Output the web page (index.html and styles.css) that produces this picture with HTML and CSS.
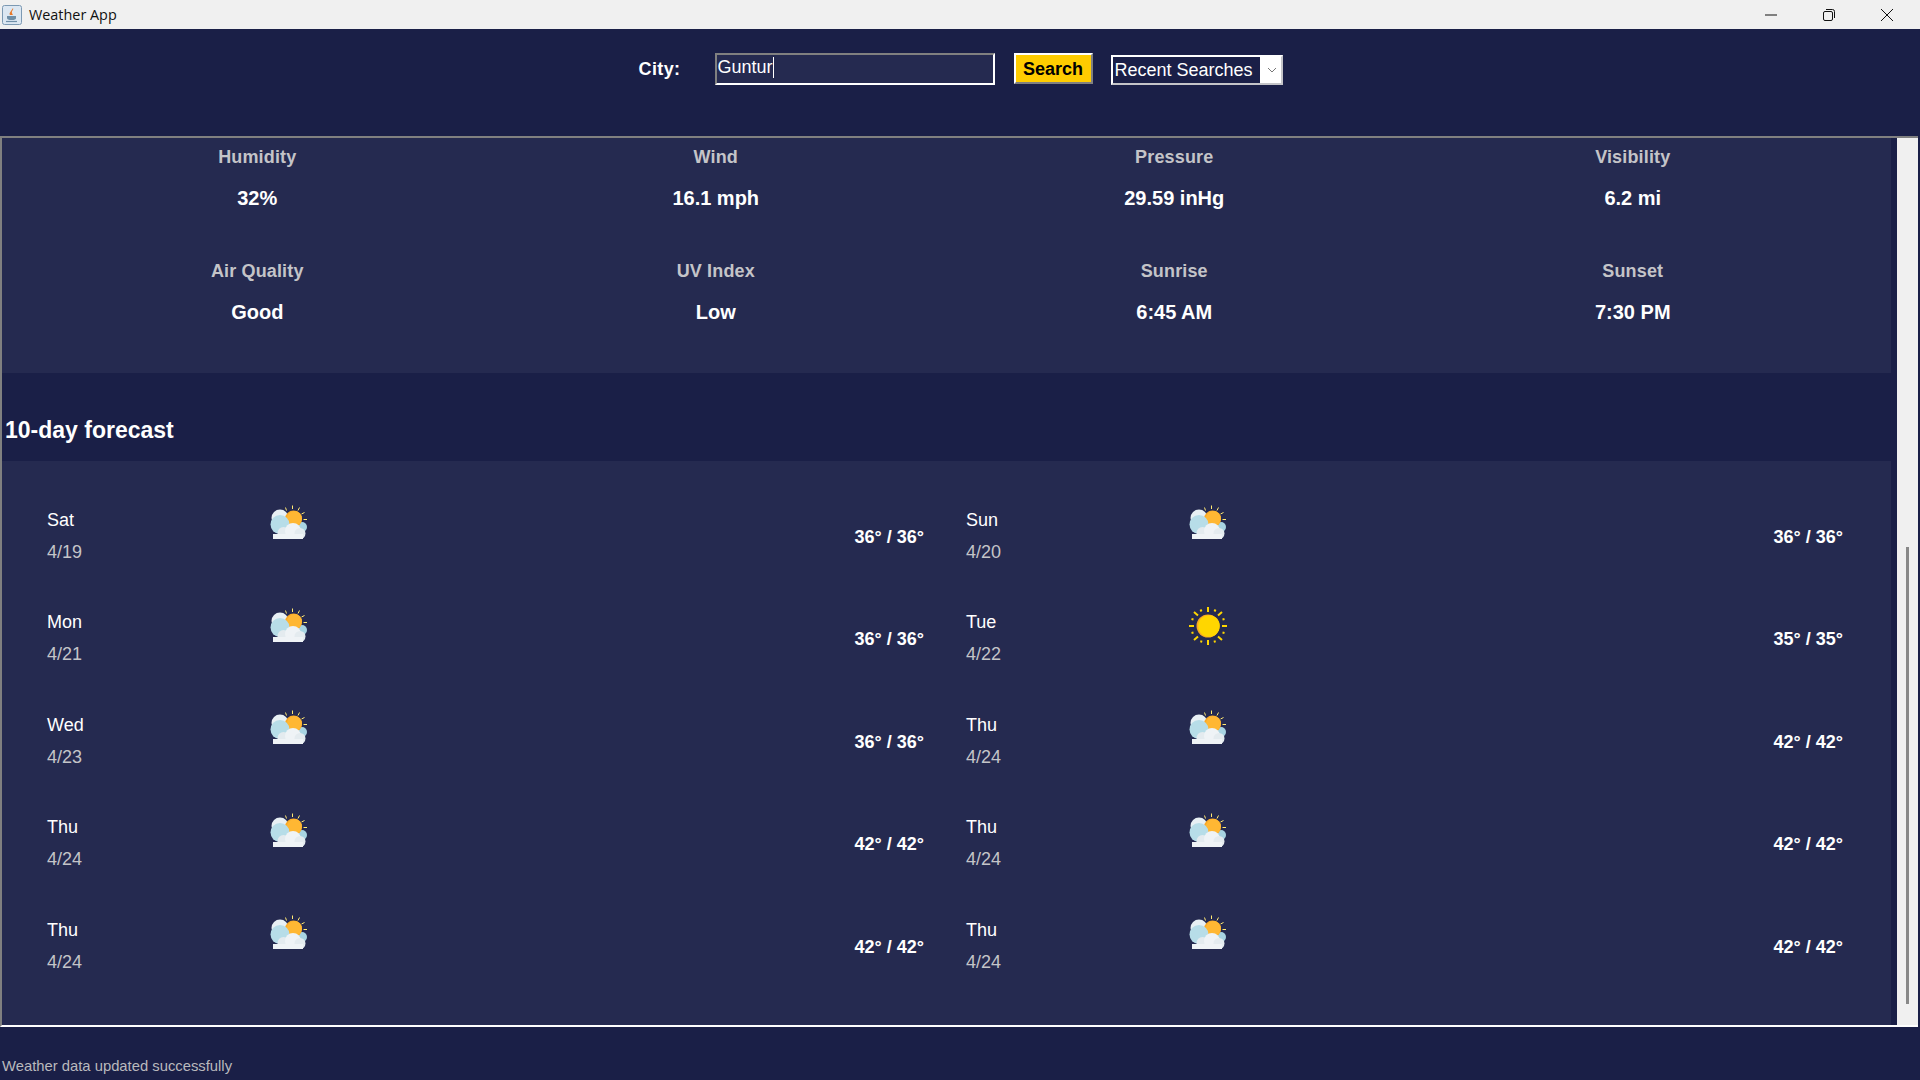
FILE: index.html
```html
<!DOCTYPE html>
<html lang="en">
<head>
    <meta charset="UTF-8">
    <title>Weather App</title>
    <link rel="stylesheet" href="styles.css">
</head>
<body>
    <svg class="icon-defs" width="0" height="0">
        <symbol id="partly" viewBox="0 0 38 38">
            <g stroke="#ffe873" stroke-width="1">
                <path d="M15.500 3.500l1 3M22.500 1.500v3.500M29.500 3.500l-1.500 3M34.500 8.500l-3 1.500M37 15.500h-3.500"/>
            </g>
            <circle cx="10" cy="14" r="8.500" fill="#e8f0f4"/>
            <circle cx="32" cy="23" r="5" fill="#a8d4e2"/>
            <circle cx="23.500" cy="15" r="8.500" fill="#f9a825"/>
            <circle cx="24.500" cy="14.500" r="7.500" fill="#ffb733"/>
            <circle cx="10" cy="20.500" r="9.500" fill="#b7dde8"/>
            <circle cx="13.500" cy="29" r="6" fill="#e4ebef"/>
            <circle cx="23" cy="27" r="8" fill="#eff3f6"/>
            <circle cx="30" cy="29.500" r="5.500" fill="#e4ebef"/>
            <rect x="3" y="30" width="30" height="5" fill="#eff3f6"/>
        </symbol>
        <symbol id="sunny" viewBox="0 0 38 38">
            <g stroke="#ffd600" stroke-width="2">
                <path d="M19 0v5M19 33v5M0 19h5M33 19h5M5 5l4 3.500M33 5l-4 3.500M5 33l4-3.500M33 33l-4-3.500"/>
                <path d="M11.500 2.500l1 2M26.500 2.500l-1 2M2.500 12l2 .5M35.500 12l-2 .5M2.500 26l2-.5M35.500 26l-2-.5M12 35.500l.5-2M26 35.500l-.5-2"/>
            </g>
            <circle cx="19" cy="19" r="11.500" fill="#f9a825"/>
            <circle cx="20" cy="19" r="10.800" fill="#ffd600"/>
        </symbol>
    </svg>

    <div class="window">
        <div class="titlebar">
            <svg class="app-icon" width="20" height="20" viewBox="0 0 20 20">
                <rect x="0.500" y="0.500" width="19" height="19" rx="2" fill="#dce7f2" stroke="#7c99b3"/>
                <path d="M11 3c1 2-2 3-1 5 .3 1 1 2 1 2H8C6.500 8 9.500 6 11 3z" fill="#e8792b"/>
                <path d="M5 11h9v2c0 1.500-1.500 2-4.500 2S5 14.500 5 13z" fill="#6f8fa8"/>
                <path d="M4 16.500h11" stroke="#6f8fa8" stroke-width="1.200"/>
            </svg>
            <span class="app-title">Weather App</span>
            <div class="window-controls">
                <svg width="14" height="14" viewBox="0 0 14 14"><path d="M1 7h12" stroke="#111" stroke-width="1"/></svg>
                <svg width="14" height="14" viewBox="0 0 14 14" fill="none" stroke="#111" stroke-width="1"><rect x="1.500" y="3.500" width="9" height="9" rx="1.500"/><path d="M4 1.500h6.500a2 2 0 0 1 2 2V10"/></svg>
                <svg width="14" height="14" viewBox="0 0 14 14"><path d="M1 1l12 12M13 1L1 13" stroke="#111" stroke-width="1"/></svg>
            </div>
        </div>

        <div class="toolbar">
            <label class="city-label">City:</label>
            <div class="city-input">Guntur<span class="caret"></span></div>
            <div class="search-button">Search</div>
            <div class="recent-combo">
                <span class="recent-text">Recent Searches</span>
                <span class="recent-arrow">
                    <svg width="10" height="6" viewBox="0 0 10 6"><path d="M1 1l4 4 4-4" fill="none" stroke="#777" stroke-width="1"/></svg>
                </span>
            </div>
        </div>

        <div class="scroll-pane">
            <div class="viewport">
                <div class="stats">
                    <div class="stat"><div class="stat-label">Humidity</div><div class="stat-value">32%</div></div>
                    <div class="stat"><div class="stat-label">Wind</div><div class="stat-value">16.1 mph</div></div>
                    <div class="stat"><div class="stat-label">Pressure</div><div class="stat-value">29.59 inHg</div></div>
                    <div class="stat"><div class="stat-label">Visibility</div><div class="stat-value">6.2 mi</div></div>
                    <div class="stat"><div class="stat-label">Air Quality</div><div class="stat-value">Good</div></div>
                    <div class="stat"><div class="stat-label">UV Index</div><div class="stat-value">Low</div></div>
                    <div class="stat"><div class="stat-label">Sunrise</div><div class="stat-value">6:45 AM</div></div>
                    <div class="stat"><div class="stat-label">Sunset</div><div class="stat-value">7:30 PM</div></div>
                </div>

                <h2 class="forecast-title">10-day forecast</h2>

                <div class="forecast">
                    <div class="day"><div class="day-name">Sat<div class="day-date">4/19</div></div><svg class="day-icon"><use href="#partly"/></svg><div class="day-temp">36° / 36°</div></div>
                    <div class="day"><div class="day-name">Sun<div class="day-date">4/20</div></div><svg class="day-icon"><use href="#partly"/></svg><div class="day-temp">36° / 36°</div></div>
                    <div class="day"><div class="day-name">Mon<div class="day-date">4/21</div></div><svg class="day-icon"><use href="#partly"/></svg><div class="day-temp">36° / 36°</div></div>
                    <div class="day"><div class="day-name">Tue<div class="day-date">4/22</div></div><svg class="day-icon"><use href="#sunny"/></svg><div class="day-temp">35° / 35°</div></div>
                    <div class="day"><div class="day-name">Wed<div class="day-date">4/23</div></div><svg class="day-icon"><use href="#partly"/></svg><div class="day-temp">36° / 36°</div></div>
                    <div class="day"><div class="day-name">Thu<div class="day-date">4/24</div></div><svg class="day-icon"><use href="#partly"/></svg><div class="day-temp">42° / 42°</div></div>
                    <div class="day"><div class="day-name">Thu<div class="day-date">4/24</div></div><svg class="day-icon"><use href="#partly"/></svg><div class="day-temp">42° / 42°</div></div>
                    <div class="day"><div class="day-name">Thu<div class="day-date">4/24</div></div><svg class="day-icon"><use href="#partly"/></svg><div class="day-temp">42° / 42°</div></div>
                    <div class="day"><div class="day-name">Thu<div class="day-date">4/24</div></div><svg class="day-icon"><use href="#partly"/></svg><div class="day-temp">42° / 42°</div></div>
                    <div class="day"><div class="day-name">Thu<div class="day-date">4/24</div></div><svg class="day-icon"><use href="#partly"/></svg><div class="day-temp">42° / 42°</div></div>
                </div>
            </div>
            <div class="scrollbar"><div class="scroll-thumb"></div></div>
        </div>

        <div class="status">Weather data updated successfully</div>
    </div>
</body>
</html>
```

FILE: styles.css
```css
:root {
    --color-dark: #1a1f47;
    --color-panel: #252a50;
    --color-label: #c4c4c8;
    --color-edge: #808080;
}

* {
    margin: 0;
    padding: 0;
    box-sizing: border-box;
}

body {
    font-family: 'Liberation Sans', Arial, sans-serif;
    background: var(--color-dark);
    color: white;
    overflow: hidden;
}

.icon-defs {
    display: block;
    height: 0;
}

.window {
    height: 1080px;
    display: flex;
    flex-direction: column;
}

.titlebar {
    height: 29px;
    flex: none;
    display: flex;
    align-items: center;
    background: #f0f0f0;
    color: #111;
    padding-left: 2px;
}

.app-icon {
    margin-right: 7px;
}

.app-title {
    font-family: 'Open Sans', 'Noto Sans', sans-serif;
    font-size: 14.4px;
}

.window-controls {
    margin-left: auto;
    display: flex;
    gap: 44px;
    padding-right: 26px;
}

.toolbar {
    height: 107px;
    flex: none;
    display: flex;
    justify-content: center;
    align-items: flex-start;
    padding-top: 24px;
    font-size: 18px;
}

.city-label {
    font-weight: bold;
    width: 77px;
    margin-top: 6px;
    line-height: 21px;
    letter-spacing: 0.4px;
    padding-left: 1px;
}

.city-input {
    width: 280px;
    height: 32px;
    margin-right: 19px;
    padding-left: 1px;
    line-height: 25px;
    background: var(--color-panel);
    border: 2px solid;
    border-color: var(--color-edge) white white var(--color-edge);
}

.caret {
    display: inline-block;
    width: 1px;
    height: 21px;
    background: white;
    vertical-align: -5px;
}

.search-button {
    width: 79px;
    height: 31px;
    margin-right: 18px;
    background: #ffcc00;
    color: black;
    font-weight: bold;
    line-height: 29px;
    text-align: center;
    border: 2px solid;
    border-color: white var(--color-edge) var(--color-edge) white;
}

.recent-combo {
    width: 172px;
    height: 30px;
    margin-top: 2px;
    display: flex;
    border: 2px solid white;
    border-right-color: var(--color-label);
    border-bottom-color: var(--color-label);
}

.recent-text {
    flex: 1;
    padding-left: 2px;
    line-height: 26px;
}

.recent-arrow {
    width: 21px;
    padding-left: 3px;
    background: white;
    display: flex;
    align-items: center;
    justify-content: center;
}

.scroll-pane {
    height: 891px;
    flex: none;
    margin-right: 2px;
    display: flex;
    border-top: 2px solid var(--color-edge);
    border-left: 2px solid var(--color-edge);
    border-bottom: 2px solid white;
}

.viewport {
    width: 1895px;
    padding-right: 6px;
    display: flex;
    flex-direction: column;
}

.stats {
    height: 235px;
    flex: none;
    display: grid;
    grid-template-columns: repeat(4, 1fr);
    grid-auto-rows: 114px;
    padding: 0 29px 0 26px;
    background: var(--color-panel);
    text-align: center;
}

.stat {
    padding-top: 9px;
}

.stat-label {
    font-size: 18px;
    font-weight: bold;
    line-height: 20px;
    letter-spacing: 0.15px;
    color: var(--color-label);
}

.stat-value {
    font-size: 20px;
    font-weight: bold;
    line-height: 23px;
    margin-top: 20px;
}

.forecast-title {
    height: 88px;
    flex: none;
    padding: 44px 0 0 3px;
    font-size: 23px;
    line-height: 26px;
}

.forecast {
    flex: 1;
    display: grid;
    grid-template-columns: repeat(2, 1fr);
    grid-auto-rows: 62px;
    column-gap: 43px;
    row-gap: 40.5px;
    padding: 44.3px 49px 0 45px;
    background: var(--color-panel);
}

.day {
    display: flex;
    align-items: center;
}

.day-name {
    width: 223px;
    font-size: 18px;
    line-height: 21px;
}

.day-date {
    margin-top: 11px;
    color: var(--color-label);
}

.day-icon {
    width: 38px;
    height: 38px;
    margin-top: -1px;
    align-self: flex-start;
}

.day-temp {
    margin: 2px -1px 0 auto;
    font-size: 18px;
    font-weight: bold;
}

.scrollbar {
    width: 21px;
    background: #f0f0f0;
    padding: 409px 0 0 9px;
}

.scroll-thumb {
    width: 3px;
    height: 457px;
    background: #888;
}

.status {
    flex: 1;
    padding: 31px 0 0 2px;
    font-size: 14.8px;
    line-height: 17px;
    color: #b9b9bd;
}
```
